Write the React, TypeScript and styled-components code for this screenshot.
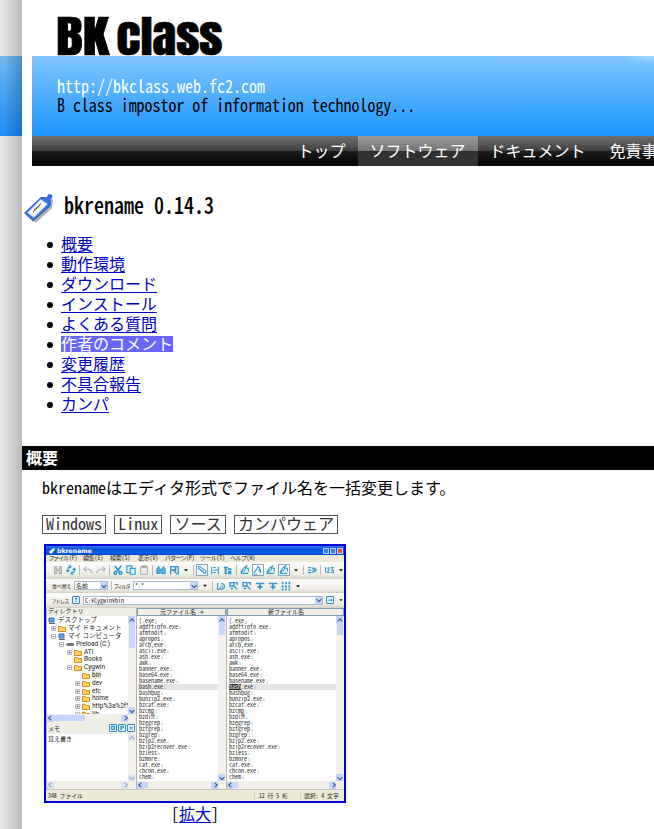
import React from "react";
import styled, { createGlobalStyle } from "styled-components";

const Global = createGlobalStyle`
  * { box-sizing: border-box; }
  html, body { margin: 0; background: #fff; overflow: hidden; }
  body { font: 16px/20px "Noto Sans CJK JP", sans-serif; font-feature-settings: "hwid" 1; color: #000; }
  ul, h1, h2, p { margin: 0; padding: 0; font-weight: 400; }
`;

const Page = styled.div`display: flex; width: 654px; height: 829px; overflow: hidden;`;
const Rail = styled.div`
  width: 22px; flex: none; padding-top: 56px;
  background: linear-gradient(90deg, #e9e9e9, #d4d4d4 50%, #b8b8b8);
`;
const RailBand = styled.div`
  height: 80px;
  background: linear-gradient(90deg, rgba(0,40,80,0) 20%, rgba(0,50,90,.3)), linear-gradient(#71b8f0, #1e8cf6);
`;
const Main = styled.main`flex: 1; min-width: 0; overflow: hidden;`;
const Logo = styled.svg`
  display: block; width: 200px; height: 56px; margin-left: 30px; overflow: visible;
  font-family: Anton, "Roboto Condensed", "Liberation Sans Narrow", sans-serif; font-size: 44px;
  stroke: #000; stroke-width: .7px;
`;
const Banner = styled.header`
  margin-left: 10px; height: 80px; padding: 20px 0 0 25px; white-space: nowrap;
  background: radial-gradient(ellipse 34px 8px at 100% 0, rgba(190,232,255,.6), transparent), linear-gradient(#80c5ff, #1c96ff);
`;
const TallLine = styled.div<{ $light?: boolean }>`
  height: 19px; line-height: 19px; transform: scaleY(1.13); letter-spacing: ${p => (p.$light ? 0 : "-.04px")};
  color: ${p => (p.$light ? "#fff" : "#000")};
`;
const Nav = styled.nav`
  display: flex; margin-left: 10px; height: 30px; padding-left: 254px; overflow: hidden;
  background: linear-gradient(#717171, #3e3e3e 50%, #1d1d1d 50%, #000);
`;
const NavItem = styled.a<{ $active?: boolean }>`
  flex: none; padding: 0 12.5px 0 11.5px; line-height: 29px; color: #fff;
  background: ${p => (p.$active ? "linear-gradient(#9a9a9a, #747474 50%, #303030 50%, #343434)" : "none")};
`;
const TitleRow = styled.div`
  display: flex; align-items: center; gap: 10px; height: 44px; margin-top: 18px; padding: 4px 0 0 2px;
`;
const TagIcon = styled.svg`width: 30px; height: 32px; margin-top: 4px;`;
const Title = styled.h1`&& { font-size: 20px; line-height: 24px; font-weight: 500; transform: translateY(-3px) scaleY(1.14); }`;
const Toc = styled.ul`list-style: none; padding: 6px 0 0 25px !important;`;
const TocItem = styled.li`
  display: flex; align-items: center; height: 20px;
  &::before { content: ""; width: 6px; height: 6px; border-radius: 50%; background: #000; margin: 1px 8px 0 0; }
`;
const Link = styled.a<{ $hot?: boolean }>`
  line-height: 15px; height: 17px; text-decoration: underline; text-underline-offset: 2px; text-decoration-thickness: 1px;
  color: ${p => (p.$hot ? "#fff" : "#0000c4")};
  background: ${p => (p.$hot ? "#6666ff" : "none")};
`;
const Section = styled.h2`
  && { margin-top: 32px; height: 24px; padding-left: 4px; background: #000; color: #fff; font-size: 16px; font-weight: 700; line-height: 23px; }
`;
const Lead = styled.p`padding: 7px 0 0 20px !important;`;
const Tags = styled.div`display: flex; gap: 8px; margin: 18px 0 10px 20px;`;
const Tag = styled.span`height: 19px; line-height: 15px; padding: 0 3.1px; border: 1px solid #555; color: #333;`;
const Figure = styled.figure`width: 302px; margin: 0 0 0 22px; text-align: center;`;
const Caption = styled.figcaption`display: flex; justify-content: center; padding-top: 3px; line-height: 15px;`;

const Shot = styled.div`
  display: flex; flex-direction: column; width: 302px; height: 259px; border: 2px solid #0000d8; overflow: hidden;
  background: #ece9d8; text-align: left; font-size: 6.3px; line-height: 7px; color: #222; white-space: nowrap;
`;
const WinTitle = styled.div`
  display: flex; align-items: center; gap: 1px; flex: none; height: 9px; padding: 0 1px 0 3px; color: #fff; font-weight: 700;
  background: linear-gradient(#2a7cf4, #0a50d8 35%, #0a5cec 80%, #0540b8);
  b { flex: 1; font: 700 6.2px/7px "DejaVu Sans", sans-serif; }
`;
const WinButton = styled.i<{ $close?: boolean }>`
  display: block; width: 6px; height: 6px; border: 1px solid #b8d0ff; background: ${p => (p.$close ? "#e8522c" : "#3d78ee")};
`;
const Menu = styled.div`
  display: flex; flex: none; height: 7px; padding-left: 3px; line-height: 6px; font-size: 6px;
  font-feature-settings: "hwid" 1, "palt" 1; letter-spacing: -.2px;
`;
const MenuItem = styled.span<{ $w: number }>`flex: none; width: ${p => p.$w}px;`;
const Bar = styled.div<{ $h: number }>`
  display: flex; flex: none; align-items: center; height: ${p => p.$h}px; padding-left: 7px; gap: 3px;
  background: linear-gradient(#fdfdfb, #efeee7 75%, #dddbd0); border-bottom: 1px solid #d8d5c8;
  svg { display: block; flex: none; }
`;
const Label = styled.span<{ $w: number }>`
  flex: none; width: ${p => p.$w}px; margin-left: -1px; font-size: 5px; font-feature-settings: "palt" 1; letter-spacing: -.2px;
`;
const Field = styled.span<{ $w: number }>`
  display: flex; flex: none; align-items: center; justify-content: space-between; width: ${p => p.$w}px; height: 9px; padding-left: 1px;
  border: 1px solid #a8bdd4; background: #fff; font-size: 6px;
`;
const Arrow = styled.i`
  display: flex; align-items: center; justify-content: center; flex: none; width: 7px; height: 7px; background: #c5d5fb;
  &::after { content: ""; width: 3px; height: 3px; border: solid #3c5590; border-width: 0 1px 1px 0; transform: translateY(-.5px) rotate(45deg); }
`;
const Panes = styled.div`display: grid; flex: none; height: 181px; grid-template-columns: 90px 90px 118px; grid-template-rows: 181px;`;
const Pane = styled.div`display: flex; flex-direction: column; min-width: 0; min-height: 0; overflow: hidden; border-left: 1px solid #b6b6ac;`;
const Head = styled.div<{ $button?: boolean }>`
  flex: none; height: 8px; line-height: 6px; font-size: 6px; padding-left: 1px; background: #efeee5;
  text-align: ${p => (p.$button ? "center" : "left")};
  border: solid #7f9cb4; border-width: ${p => (p.$button ? "1px" : "0")};
  small { font-size: 4px; margin-left: 4px; color: #777; }
`;
const Scroller = styled.div<{ $h?: number }>`
  display: flex; flex: ${p => (p.$h ? `0 0 ${p.$h}px` : "1")}; min-height: 0; background: #fff;
`;
const Lines = styled.div`flex: 1; min-width: 0; overflow: hidden; padding: 2px 0 0 1px; font-size: 6px; line-height: 6px;`;
const Line = styled.div<{ $current?: boolean }>`
  height: 6px; padding-left: 1px; color: #333; background: ${p => (p.$current ? "#e4e4e4" : "none")};
  em { color: #79a; font-style: normal; font-size: 4px; }
  mark { display: inline-block; height: 6px; background: #222; color: #fff; vertical-align: top; }
`;
const VScroll = styled.div<{ $thumb: number }>`
  display: flex; flex: none; flex-direction: column; width: 8px; background: #f3f2ec;
  &::after { content: ""; flex: 1; }
  u { height: ${p => p.$thumb}px; margin: 0 1px; background: #c5d5fb; border-radius: 1px; }
  i:last-of-type { order: 2; }
  i:first-of-type::after { transform: translateY(1px) rotate(225deg); }
  i { opacity: ${p => (p.$thumb ? 1 : 0.45)}; }
`;
const HScroll = styled.div<{ $thumb: number }>`
  display: flex; flex: none; align-items: center; justify-content: space-between; height: 8px; padding-right: 8px; background: #f0efe8;
  u { width: ${p => p.$thumb}px; height: 6px; margin-right: auto; background: #c5d5fb; border-radius: 1px; }
  i:first-of-type::after { transform: rotate(135deg); }
  i:last-of-type::after { transform: rotate(315deg); }
  i { opacity: ${p => (p.$thumb ? 1 : 0.45)}; }
`;
const Tree = styled.div`flex: 1; min-width: 0; overflow: hidden; padding-top: 1px;`;
const Node = styled.div<{ $depth: number; $on?: boolean }>`
  display: flex; align-items: center; gap: 2px; height: 7.8px; font-size: 6.5px; padding-left: ${p => p.$depth}px;
  font-family: Roboto, "Noto Sans CJK JP", sans-serif;
  span { background: ${p => (p.$on ? "#ece9d8" : "none")}; }
  svg { flex: none; }
`;
const MemoHead = styled.div`
  display: flex; align-items: center; flex: none; height: 12px; padding: 0 1px; gap: 1px; background: #efeee5; font-size: 6px;
  span { flex: 1; }
`;
const Mini = styled.i`
  display: flex; flex: none; align-items: center; justify-content: center; width: 8px; height: 8px; border: 1px solid #3688bd; border-radius: 1px;
  background: #e4f5ff; color: #1686c2; font: 700 6px/6px "DejaVu Sans", sans-serif;
`;
const Status = styled.div`
  display: flex; flex: none; align-items: center; height: 11px; padding-left: 1px; border-top: 1px solid #c8c5b8; font-size: 5.8px;
`;
const StatusCell = styled.span<{ $w: number }>`width: ${p => p.$w}px; flex: none; border-right: 1px solid #d2cfc0; padding-left: 1px;`;

const glyphs: Record<string, React.ReactNode> = {
  sep: <path d="M6 0v12" stroke="#bbb" />,
  save: <g stroke="#aaa" fill="#ddd"><path d="M2 2h8v8H2z" /><path d="M4 2v3h4V2M4 10V7h4v3" fill="#fff" /></g>,
  refresh: <path d="M2 8V5q0-3 4-3M4 0l2 2-2 2M10 4v3q0 3-4 3M8 8l-2 2 2 2M0 6l2 2 2-2M8 6l2-2 2 2" />,
  undo: <path d="M4 2 1 5l3 3M1 5h5q4 0 5 5" stroke="#aab" />,
  redo: <path d="m8 2 3 3-3 3m3-3H6q-4 0-5 5" stroke="#aab" />,
  cut: <g strokeWidth="1.8"><path d="m2 1 6 7M10 1 4 8" /><circle cx="3" cy="9.5" r="1.6" /><circle cx="9" cy="9.5" r="1.6" /></g>,
  copy: <g fill="#dff3ff"><path d="M1 1h6v8H1z" /><path d="M5 4h6v7H5z" /></g>,
  paste: <path d="M2 2h8v9H2zM4 1h4v2H4z" stroke="#aaa" fill="#eee" />,
  find: <path d="M1 10V5l2-3 2 3v5zM7 10V5l2-3 2 3v5zM5 6h2" fill="#65b9e8" />,
  replace: <path d="M2 11V2h3q3 0 3 2t-3 2H2m3 0 5 5M8 7V2h3v9" strokeWidth="1.6" />,
  clip: <path d="m9 10-7-6q-1-3 2-2l6 5q2 3-1 3L4 5" />,
  list: <path d="M2 2v9M4 3h3M4 6h6M4 9h3M10 2v9" />,
  tree: <path d="M1 3h5M3 3v7h2M3 6h2M6 5h4M6 8h4M6 10h4" strokeWidth="2" />,
  edit: <path d="m1 9 3-5 4-3-2 5zM1 10h9M8 4h2v4" />,
  undoEdit: <path d="M1 10 5 4l1-2 2 2-1 4M1 11h4M9 5v5" />,
  run: <path d="M1 3h4M1 6h4M1 9h4M6 3l3 3-3 3M9 3l2 3-2 3" strokeWidth="1.5" />,
  nums: <path d="M2 3v6M1 3h1M4 4q3-2 2 1L4 9h3M8 3h3L9 6q3 0 2 3H8" />,
  clock: <path d="M2 2v8h3M6 3q5 0 4 5-4 4-5-1M7 5l1 3" />,
  sort: <path d="M1 2h5v4H1zM6 6l4 4M7 2h3v3M2 9h3" strokeWidth="1.6" />,
  line: <path d="M1 3h10M6 4v6M3 7h6" strokeWidth="2" />,
  grid: <path d="M2 1v10M6 1v10M10 1v10" strokeWidth="2" strokeDasharray="3 1" />,
  drop: <path d="M3.500 5h5L6 8z" fill="#111" stroke="none" />,
};
const Glyph = ({ name, size = 10 }: { name: string; size?: number }) => (
  <svg width={name === "sep" ? 1 : name === "drop" ? 8 : size} height={size} viewBox={name === "sep" ? "5.500 0 1 12" : name === "drop" ? "1 0 10 12" : "0 0 12 12"} fill="none" stroke="#3197cf" strokeWidth="1.3">{glyphs[name]}</svg>
);
const Framed = styled.span`
  display: flex; flex: none; align-items: center; justify-content: center; width: 12px; height: 12px; border: 1px solid #8aa5b8; background: #fafdff; margin: 0 -1px;
`;
const Folder = () => <svg width="8" height="7" viewBox="0 0 8 7"><path d="M.5 1.5h3l1 1h3v4h-7z" fill="#ffd55c" stroke="#d8891f" /></svg>;
const Expander = ({ open }: { open?: boolean }) => (
  <svg width="5" height="5" viewBox="0 0 5 5"><path d="M.5.5h4v4h-4z" fill="#fff" stroke="#99a" strokeWidth=".7" /><path d={open ? "M1.5 2.5h2" : "M1.5 2.5h2M2.5 1.5v2"} stroke="#333" strokeWidth=".7" /></svg>
);
const Device = () => <svg width="8" height="7" viewBox="0 0 8 7"><path d="M1 1h5v4H1z" fill="#57a8f0" stroke="#456a9c" /><path d="M1 6.5h6" stroke="#667" /></svg>;
const Drive = () => <svg width="8" height="7" viewBox="0 0 8 7"><path d="M0 3 2 2h5l1 1v2H1z" fill="#777" /></svg>;

const files = "[.exe addftinfo.exe afmtodit apropos arch.exe ascii.exe ash.exe awk banner.exe base64.exe basename.exe bash.exe bashbug bunzip2.exe bzcat.exe bzcmp bzdiff bzegrep bzfgrep bzgrep bzip2.exe bzip2recover.exe bzless bzmore cat.exe chcon.exe chem".split(" ");
const folders: [string, number, boolean?][] = [["ATI", 20, true], ["Books", 27], ["Cygwin", 20, true], ["bin", 35], ["dev", 28, true], ["etc", 28, true], ["home", 28, true], ["http%3a%2f%2", 28, true], ["lib", 28, true]];

const FilePane = ({ title, sorted, marked }: { title: string; sorted?: boolean; marked?: boolean }) => (
  <Pane>
    <Head $button>{title}{sorted && <small>▲</small>}</Head>
    <Scroller>
      <Lines>
        {files.map(f => (
          <Line key={f} $current={f === "bash.exe"}>
            {marked && f === "bash.exe" ? <><mark>bash</mark>.exe</> : f}<em>↓</em>
          </Line>
        ))}
      </Lines>
      <VScroll $thumb={12}><Arrow /><u /><Arrow /></VScroll>
    </Scroller>
    <HScroll $thumb={4}><Arrow /><u /><Arrow /></HScroll>
  </Pane>
);

const AppWindow = () => (
  <Shot>
    <WinTitle>
      <svg width="7" height="6" viewBox="0 0 7 6"><path d="m0 4 3-3 3-1-1 3-3 3z" fill="#fff" /></svg>
      <b>bkrename</b><WinButton /><WinButton /><WinButton $close />
    </WinTitle>
    <Menu>
      <MenuItem $w={34}>ファイル(F)</MenuItem><MenuItem $w={27}>編集(E)</MenuItem><MenuItem $w={28}>検索(S)</MenuItem>
      <MenuItem $w={27}>表示(V)</MenuItem><MenuItem $w={35}>パターン(P)</MenuItem><MenuItem $w={30}>ツール(T)</MenuItem><MenuItem $w={30}>ヘルプ(H)</MenuItem>
    </Menu>
    <Bar $h={17}>
      {["save", "refresh", "sep", "undo", "redo", "sep", "cut", "copy", "paste", "sep", "find", "replace", "drop", "sep"].map((n, i) => <Glyph key={i} name={n} />)}
      <Framed><Glyph name="clip" /></Framed><Glyph name="list" /><Glyph name="tree" /><Glyph name="sep" /><Glyph name="edit" />
      <Framed><Glyph name="undoEdit" /></Framed><Glyph name="edit" /><Framed><Glyph name="edit" /></Framed><Glyph name="drop" />
      <Glyph name="sep" /><Glyph name="run" /><Glyph name="sep" /><Glyph name="nums" /><Glyph name="drop" />
    </Bar>
    <Bar $h={14}>
      <Label $w={19}>並べ替え</Label><Field $w={34}>名前<Arrow /></Field><Glyph name="sep" size={9} />
      <Label $w={16}>フィルタ</Label><Field $w={65}>*.*<Arrow /></Field><Glyph name="drop" size={9} /><Glyph name="sep" />
      {["clock", "sort", "sort", "line", "line", "grid", "drop"].map((n, i) => <Glyph key={i} name={n} />)}
    </Bar>
    <Bar $h={15}>
      <Label $w={17}>アドレス</Label><Mini>↑</Mini><Field $w={240}>C:¥Cygwin¥bin<Arrow /></Field><Mini>→</Mini><Glyph name="drop" size={8} />
    </Bar>
    <Panes>
      <Pane>
        <Head>ディレクトリ</Head>
        <Scroller $h={98}>
          <Tree>
            <Node $depth={1}><Device /><span>デスクトップ</span></Node>
            <Node $depth={4}><Expander /><Folder /><span>マイ ドキュメント</span></Node>
            <Node $depth={4}><Expander open /><Device /><span>マイ コンピュータ</span></Node>
            <Node $depth={12}><Expander open /><Drive /><span>Preload (C:)</span></Node>
            {folders.map(([name, depth, branch]) => (
              <Node key={name} $depth={depth} $on={name === "bin"}>{branch && <Expander open={name === "Cygwin"} />}<Folder /><span>{name}</span></Node>
            ))}
          </Tree>
          <VScroll $thumb={25}><Arrow /><u /><Arrow /></VScroll>
        </Scroller>
        <HScroll $thumb={31}><Arrow /><u /><Arrow /></HScroll>
        <MemoHead><span>メモ</span><Mini>D</Mini><Mini>P</Mini><Mini>×</Mini></MemoHead>
        <Scroller><Lines>覚え書き</Lines><VScroll $thumb={0}><Arrow /><u /><Arrow /></VScroll></Scroller>
        <HScroll $thumb={0}><Arrow /><u /><Arrow /></HScroll>
      </Pane>
      <FilePane title="元ファイル名" sorted />
      <FilePane title="新ファイル名" marked />
    </Panes>
    <Status>
      <StatusCell $w={208}>348 ファイル</StatusCell><StatusCell $w={46}>&nbsp;12 行 5 桁</StatusCell><span>&nbsp;選択: 4 文字</span>
    </Status>
  </Shot>
);

const toc = ["概要", "動作環境", "ダウンロード", "インストール", "よくある質問", "作者のコメント", "変更履歴", "不具合報告", "カンパ"];

export default function App() {
  return (
    <>
      <Global />
      <Page>
        <Rail><RailBand /></Rail>
        <Main>
          <Logo viewBox="0 0 200 56">
            <text x="4" y="55" textLength="53" lengthAdjust="spacingAndGlyphs">BK</text>
            <text x="64.500" y="55" textLength="106" lengthAdjust="spacingAndGlyphs">class</text>
          </Logo>
          <Banner>
            <TallLine $light>http://bkclass.web.fc2.com</TallLine>
            <TallLine>B class impostor of information technology...</TallLine>
          </Banner>
          <Nav>
            <NavItem>トップ</NavItem><NavItem $active>ソフトウェア</NavItem><NavItem>ドキュメント</NavItem><NavItem>免責事項</NavItem>
          </Nav>
          <TitleRow>
            <TagIcon viewBox="0 0 30 32">
              <path d="m3 21 9 8 16-15 1-8-4-3z" fill="#000" opacity=".3" />
              <path d="M.5 19 17 3.500l6 .2 1.500-3 3 .3.5 2-2 2.500.5 6L9 27z" fill="#3373e6" stroke="#1d4fae" strokeWidth=".8" />
              <path d="M3.500 18.700 16.700 5.500l6.800 4.500L10 23.500z" fill="#f7f7f7" stroke="#b5cdf5" strokeWidth=".5" />
              <path d="m9 18 1.700-1.500.2-1.500 1.500 0 .5-1.700 1.500-.3.800-1.800 1.800-1.700" fill="none" stroke="#333" strokeWidth="1" />
            </TagIcon>
            <Title>bkrename 0.14.3</Title>
          </TitleRow>
          <Toc>
            {toc.map(t => <TocItem key={t}><Link $hot={t === "作者のコメント"}>{t}</Link></TocItem>)}
          </Toc>
          <Section>概要</Section>
          <Lead>bkrenameはエディタ形式でファイル名を一括変更します。</Lead>
          <Tags>{["Windows", "Linux", "ソース", "カンパウェア"].map(t => <Tag key={t}>{t}</Tag>)}</Tags>
          <Figure>
            <AppWindow />
            <Caption>[<Link>拡大</Link>]</Caption>
          </Figure>
        </Main>
      </Page>
    </>
  );
}
